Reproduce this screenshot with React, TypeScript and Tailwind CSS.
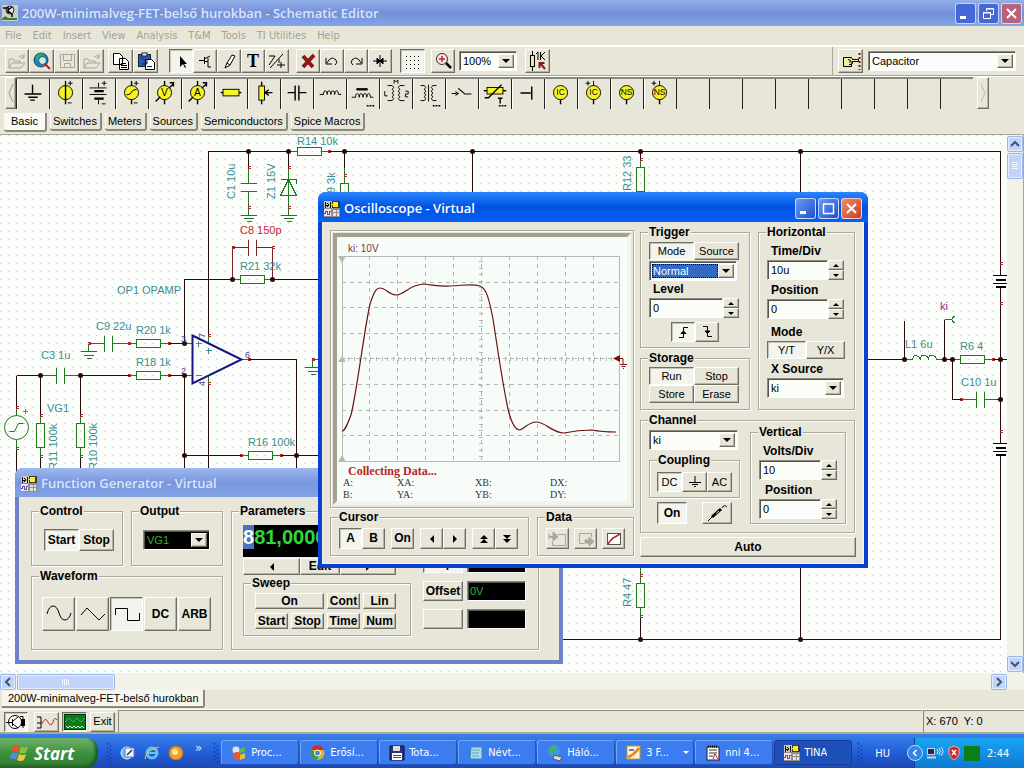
import type { ReactNode } from "react"
import clsx from "clsx"

const WIRE = "#2a0a0a"
const PART = "#1c7a1c"
const LABEL = "#3a8f94"

/* ---------- controls ---------- */

interface BtnProps {
  children?: ReactNode
  className?: string
  pressed?: boolean
  label?: string
}

function Btn({ children, className, pressed, label }: BtnProps) {
  return (
    <button
      type="button"
      aria-label={label}
      aria-pressed={pressed}
      className={clsx(
        "flex shrink-0 items-center justify-center overflow-hidden whitespace-nowrap border",
        pressed
          ? "border-t-[#716f64] border-l-[#716f64] border-r-white border-b-white bg-[#f3f4ed] shadow-[inset_1px_1px_0_#c5c4b8]"
          : "border-t-white border-l-white border-r-[#716f64] border-b-[#716f64] bg-[#e7e6d9] shadow-[inset_-1px_-1px_0_#b5b3a2]",
        className,
      )}
    >
      {children}
    </button>
  )
}

function Arrow({ dir = "down", size = 4 }: { dir?: "up" | "down" | "left" | "right"; size?: number }) {
  const d = {
    up: "M0 4 L4 0 L8 4Z",
    down: "M0 0 L8 0 L4 4Z",
    left: "M4 0 L4 8 L0 4Z",
    right: "M0 0 L4 4 L0 8Z",
  }[dir]
  const flat = dir === "up" || dir === "down"
  return (
    <svg width={flat ? size * 2 : size} height={flat ? size : size * 2} viewBox={flat ? "0 0 8 4" : "0 0 4 8"} aria-hidden>
      <path d={d} fill="#000" />
    </svg>
  )
}

const SUNKEN = "border border-t-[#8a887b] border-l-[#8a887b] border-r-white border-b-white shadow-[inset_1px_1px_0_#55544c]"

function Combo({ value, label, className, tone }: { value: string; label: string; className?: string; tone?: "dark" | "selected" }) {
  return (
    <div className={clsx("flex p-[2px]", SUNKEN, tone === "dark" ? "bg-black" : "bg-[#fbfdf9]", className)}>
      <select
        aria-label={label}
        defaultValue={value}
        className={clsx(
          "min-w-0 flex-1 appearance-none rounded-none pl-px",
          tone === "dark" && "bg-black text-[#35b535]",
          tone === "selected" && "bg-[#316ac5] text-white outline-1 -outline-offset-1 outline-dotted outline-black",
        )}
      >
        <option>{value}</option>
      </select>
      <Btn className="w-4" label={`Open ${label}`}>
        <Arrow />
      </Btn>
    </div>
  )
}

function Spin({ value, id, className }: { value: string; id: string; className?: string }) {
  return (
    <div className={clsx("flex h-5", className)}>
      <input id={id} defaultValue={value} className={clsx("min-w-0 flex-1 bg-[#fbfdf9] pl-[3px]", SUNKEN)} />
      <div className="flex w-4 flex-col">
        <Btn className="h-[10px]" label="Increase">
          <Arrow dir="up" size={3} />
        </Btn>
        <Btn className="h-[10px]" label="Decrease">
          <Arrow size={3} />
        </Btn>
      </div>
    </div>
  )
}

function Group({ title, className, children }: { title: string; className?: string; children: ReactNode }) {
  return (
    <fieldset className={clsx("min-w-0 border border-[#aaa999] px-2 shadow-[1px_1px_0_#fff,inset_1px_1px_0_#fff]", className)}>
      <legend className="-ml-px bg-[#e7e6d9] px-px text-[12px] leading-[12px] font-bold">{title}</legend>
      {children}
    </fieldset>
  )
}

function FieldLabel({ children, htmlFor, className }: { children: ReactNode; htmlFor?: string; className?: string }) {
  return (
    <label htmlFor={htmlFor} className={clsx("block text-[12px] leading-[14px] font-bold", className)}>
      {children}
    </label>
  )
}

/* ---------- small drawings ---------- */

function Icon({ children, w = 20, h = 20 }: { children: ReactNode; w?: number; h?: number }) {
  return (
    <svg width={w} height={h} viewBox={`0 0 ${w} ${h}`} fill="none" stroke="#000" className="shrink-0" aria-hidden>
      {children}
    </svg>
  )
}

function TinaIcon() {
  return (
    <svg width="16" height="16" viewBox="0 0 16 16" className="shrink-0" shapeRendering="crispEdges" aria-hidden>
      <rect width="16" height="16" fill="#8f9088" />
      <path d="M0 0h8v7H0z" fill="#c9c9b8" />
      <path d="M1 1v6M1 4h3M3 2l2 2-2 2M6 1v6" stroke="#111" strokeWidth="1" fill="none" />
      <rect x="8" y="0" width="8" height="7" fill="#3a3a3a" />
      <circle cx="11.500" cy="3.500" r="3" fill="#ffee20" />
      <rect x="0" y="8" width="7" height="7" fill="#f6e3ee" />
      <path d="M0 12h1v-2h2v3h2v-3h2" stroke="#5a52b0" fill="none" />
      <path d="M9 9h3v2H9zM13 9h2v2h-2zM9 12h3v3H9zM13 12h2v3h-2z" fill="#e4e4e0" />
    </svg>
  )
}

function CaptionButtons({ active, middle }: { active?: boolean; middle: "maximize" | "restore" }) {
  const base = "flex h-[21px] w-[21px] items-center justify-center rounded-[3px] border border-white/70"
  return (
    <div className="flex gap-[2px]">
      <button type="button" aria-label="Minimize" className={clsx(base, active ? "bg-linear-to-br from-[#6f9af2] to-[#1c4fd0]" : "bg-[#4468d8]")}>
        <Icon w={13} h={13}>
          <path d="M1 10.500h6" stroke="#fff" strokeWidth="3" />
        </Icon>
      </button>
      <button type="button" aria-label="Resize" className={clsx(base, active ? "bg-linear-to-br from-[#6f9af2] to-[#1c4fd0]" : "bg-[#4468d8]")}>
        <Icon w={13} h={13}>
          {middle === "maximize" ? (
            <path d="M1.500 2.500v9h10v-9M1 2h11" stroke="#fff" strokeWidth="1.500" />
          ) : (
            <path d="M4.500 4V1.500h7v6H9M4 2h8M1.500 5.500h7v6h-7zM1 6h8" stroke="#fff" />
          )}
        </Icon>
      </button>
      <button type="button" aria-label="Close" className={clsx(base, active ? "bg-linear-to-br from-[#ee8a6a] to-[#cc3c16]" : "bg-[#b5627a]")}>
        <Icon w={13} h={13}>
          <path d="M2 2l9 9M11 2l-9 9" stroke="#fff" strokeWidth="2" />
        </Icon>
      </button>
    </div>
  )
}

/* ---------- main tool bar ---------- */

function FolderShape() {
  return <path d="M2 17V8h4l1 2h6v2M2 17l3-5h13l-4 5zM12 6q3-3 5 0M17 3v4h-3" stroke="#a7a698" />
}

function MainToolbar() {
  const b = "h-6 w-6"
  return (
    <div className="flex h-[31px] items-center border-t-2 border-t-white border-b border-b-[#aaa999] pl-[5px]">
      <div className="flex">
        <Btn className={b} label="Open"><Icon><FolderShape /></Icon></Btn>
        <Btn className="h-6 w-[25px]" label="Open from Web">
          <Icon>
            <circle cx="9" cy="9" r="7" fill="#1f86b8" stroke="#1b3f8c" />
            <path d="M4 5q4-4 7-2l-3 3-3 4zM10 11l4-2v4l-4 2z" fill="#2eb25a" stroke="none" />
            <circle cx="10.500" cy="9.500" r="4" fill="#c9ecf0" stroke="#155" />
            <path d="M13 13l5 5" stroke="#c01818" strokeWidth="2" />
          </Icon>
        </Btn>
        <Btn className="h-6 w-[25px]" label="Save">
          <Icon><path d="M3.500 3.500h14v13h-14zM6.500 3.500v6h8v-6M7.500 16.500v-4h6v4" stroke="#a7a698" /></Icon>
        </Btn>
        <Btn className="h-6 w-[25px]" label="Close"><Icon><FolderShape /></Icon></Btn>
      </div>
      <div className="ml-1 flex">
        <Btn className="h-6 w-[25px]" label="Copy">
          <Icon>
            <path d="M2.500 2.500h6l3 3v8h-9zM8.500 7.500h6l3 3v8h-9z" fill="#fff" />
            <path d="M10 12.500h5M10 14.500h6M10 16.500h6" />
          </Icon>
        </Btn>
        <Btn className="h-6 w-[25px]" label="Paste">
          <Icon>
            <rect x="2.500" y="3.500" width="12" height="12" fill="#2a58c0" stroke="#123" />
            <path d="M9.500 8.500h6l3 3v7h-9z" fill="#fff" />
            <path d="M5 6l6 6M11 8v5h-5M11 15.500h5" stroke="#124" />
            <rect x="6" y="2" width="5" height="3" fill="#eee" stroke="#222" />
          </Icon>
        </Btn>
      </div>
      <div className="ml-[11px] flex">
        <Btn className={b} pressed label="Select"><Icon><path d="M9 5v11l3-3 2 4 1-1-2-3h3z" fill="#000" stroke="none" /></Icon></Btn>
        <Btn className={b} label="Last component"><Icon><path d="M4 9.500h5M9.500 6v7M9 8l6-3M10 10.500h3M13 7v9h3" /></Icon></Btn>
        <Btn className={b} label="Wire"><Icon><path d="M6 17l2-5 5-8 3 1-5 9zM8 12l3 2" fill="#fff" /></Icon></Btn>
        <Btn className={b} label="Text"><span className="font-['Liberation_Serif',serif] text-[18px] leading-none font-bold">T</span></Btn>
        <Btn className={b} label="Mirror"><Icon><path d="M2 5h6M3 17L16 3M2 14l6-9M12 8v4M10 14h8M14 11v6" /></Icon></Btn>
      </div>
      <div className="ml-[7px] flex">
        <Btn className={b} label="Delete"><Icon><path d="M5 5l10 11M16 4L5 16" stroke="#8f1616" strokeWidth="4" /></Icon></Btn>
        <Btn className={b} label="Undo"><Icon><path d="M5 12q4-8 9-3 2 3-1 5M4 7v6h6" /></Icon></Btn>
        <Btn className={b} label="Redo"><Icon><path d="M15 12q-4-8-9-3-2 3 1 5M16 7v6h-6" /></Icon></Btn>
        <Btn className={b} label="Center"><Icon><path d="M3 10h14M10 4v12" /><path d="M7 7l3 3-3 3zM13 7l-3 3 3 3z" fill="#000" /></Icon></Btn>
      </div>
      <Btn className="ml-2 h-6 w-[25px]" pressed label="Grid">
        <Icon><path d="M3 5.500h15M3 9.500h15M3 13.500h15M3 17.500h15" strokeDasharray="1 3" /></Icon>
      </Btn>
      <Btn className="ml-[6px] h-6 w-6" label="Zoom">
        <Icon>
          <circle cx="9" cy="8" r="5.500" fill="#f8e4dc" stroke="#333" />
          <path d="M6 8h6M9 5v6" stroke="#c22" strokeWidth="1.500" />
          <path d="M13 12l5 5" strokeWidth="2.500" />
        </Icon>
      </Btn>
      <Combo value="100%" label="Zoom level" className="ml-1 h-5 w-[58px]" />
      <Btn className="ml-2 h-6 w-[25px]" label="Component value">
        <svg width="22" height="20" viewBox="0 0 22 20" fill="none" stroke="#000" aria-hidden>
          <path d="M5.500 0v20" />
          <rect x="3.500" y="4.500" width="4" height="11" fill="#f4e79a" />
          <path d="M9 3l2-2v8M13.500 1v8M18 1l-4 4 4 4" />
          <path d="M12.500 17v-5h5M13 12l5 6" stroke="#8f1616" strokeWidth="2" />
        </svg>
      </Btn>
      <div className="ml-auto flex h-full items-center gap-[5px] border-l border-l-[#aaa999] pr-2 pl-[5px]">
        <Btn className="h-6 w-[25px]" label="Find component">
          <Icon>
            <path d="M2.500 6.500h8l1 2h6v2h-6v2h-1v3h-8z" fill="#f6ef9a" />
            <path d="M7 8.500l3 1M8 11h4M8 13.500h3" />
            <path d="M18.500 2v17" stroke="#811" strokeWidth="2" strokeDasharray="2 2" />
          </Icon>
        </Btn>
        <Combo value="Capacitor" label="Component list" className="h-5 w-[148px]" />
      </div>
    </div>
  )
}

/* ---------- component palette ---------- */

const Y = "#f7f425"

function Meter({ text, pm, arrow, feet, small }: { text?: string; pm?: boolean; arrow?: boolean; feet?: boolean; small?: boolean }) {
  return (
    <>
      <path d={small ? "M15.500 17v12" : "M15.500 4v25"} strokeWidth="1.500" />
      <circle cx="15.500" cy="16.500" r="7.500" fill={Y} />
      {arrow && <path d="M6 26l5-5M20 12l5-5M21 6h4v4" strokeWidth="1.500" />}
      {pm && <path d="M18 6.500h5M20.500 4v5M18 27.500h4" />}
      {feet && <path d="M7 6.500h5M9.500 4v5M15.500 4v5" />}
      {text && (
        <text x="15.500" y={small ? 19.500 : 20.500} textAnchor="middle" fill="#000" stroke="none" fontSize={small ? 9 : 11} fontFamily="Liberation Sans">
          {text}
        </text>
      )}
    </>
  )
}

const Dots = () => <path d="M20 30.500h8" strokeDasharray="2 1" strokeWidth="1.500" />

const palette: { name: string; art: ReactNode }[] = [
  { name: "Ground", art: <path d="M15.500 8v10M7 18h18M11 21.500h10M13 24.500h5" strokeWidth="1.500" /> },
  { name: "Voltage source", art: <><Meter pm /><path d="M15.500 9v15" strokeWidth="1.500" /></> },
  { name: "Battery", art: <><path d="M15.500 6v5M15.500 24v5M6 11.500h18M6 18.500h18M19 6.500h5M21.500 4v5M19 28.500h4" /><path d="M11 15h10M11 23h10" strokeWidth="2.500" /></> },
  { name: "Voltage generator", art: <><Meter pm /><path d="M10 19l4-1 3-4 4-1" /></> },
  { name: "Voltmeter", art: <Meter text="V" arrow /> },
  { name: "Ammeter", art: <Meter text="A" arrow /> },
  { name: "Resistor", art: <><path d="M5 16.500h22" strokeWidth="1.500" /><rect x="7.500" y="13" width="17" height="7" fill={Y} /></> },
  { name: "Potentiometer", art: <><path d="M13.500 5v24M17 16.500h8M21 13.500l-4 3 4 3" strokeWidth="1.500" /><rect x="10.500" y="9.500" width="6" height="15" fill={Y} /></> },
  { name: "Capacitor", art: <path d="M6 16.500h8M18 16.500h8M14 9v16M18 9v16" strokeWidth="1.500" /> },
  { name: "Inductor", art: <path d="M5 18.500h4q0-4 2-4t2 4q0-4 2-4t2 4q0-4 2-4t2 4q0-4 2-4t2 4h3" /> },
  { name: "Core inductor", art: <><path d="M9 13h12" strokeWidth="2.500" /><path d="M4 21.500h4q0-4 2-4t2 4q0-4 2-4t2 4q0-4 2-4t2 4q0-4 2-4t2 4h3" /><Dots /></> },
  { name: "Coupled inductors", art: <path d="M7 9h5q3 2 0 4 3 2 0 4 3 2 0 4 3 2 0 4H7M25 9h-5q-3 2 0 4-3 2 0 4-3 2 0 4-3 2 0 4h5M14 7V3l2 2 2-2v4M4 15v5h3M26 15h3v3h-3v3h3" /> },
  { name: "Transformer", art: <><path d="M7 9h4q3 2 0 4 3 2 0 4 3 2 0 4 3 2 0 4H7M24 9h-4q-3 2 0 4-3 2 0 4-3 2 0 4-3 2 0 4h4M15.500 8v18" /><Dots /></> },
  { name: "Switch", art: <path d="M5 17.500h5M9 15.500l3 2-3 2M12 12l7 6h7" strokeWidth="1.200" /> },
  { name: "Thermistor", art: <><path d="M4 14.500h24" strokeWidth="1.500" /><rect x="7.500" y="11" width="17" height="7" fill={Y} /><path d="M5 22h4L23 8M19 22.500h5M21.500 22v6" strokeWidth="1.500" /><Dots /></> },
  { name: "Jumper", art: <path d="M8 17h11M20 10v14" strokeWidth="1.500" /> },
  { name: "IC", art: <Meter text="IC" small /> },
  { name: "Open IC", art: <Meter text="IC" feet small /> },
  { name: "NS", art: <Meter text="NS" small /> },
  { name: "Open NS", art: <Meter text="NS" feet small /> },
]

function Palette() {
  return (
    <div className="flex h-[37px] items-start overflow-hidden border-t border-t-white pl-[5px]">
      <Btn className="h-8 w-[11px]" label="Scroll left">
        <Icon w={7} h={20}><path d="M6 1L2 10l4 9" stroke="#999" /></Icon>
      </Btn>
      <div className="flex h-8 border-t-2 border-t-[#8a887b]">
        {palette.map((c) => (
          <button key={c.name} type="button" aria-label={c.name} className="flex w-[33px] shrink-0 items-center border-l border-l-[#222] shadow-[inset_1px_0_0_#fff]">
            <svg width="32" height="30" viewBox="-1 2 34 32" fill="none" stroke="#000" aria-hidden>{c.art}</svg>
          </button>
        ))}
        {Array.from({ length: 9 }, (_, i) => (
          <span key={i} className="w-[33px] shrink-0 border-l border-l-[#222]" />
        ))}
      </div>
      <Btn className="ml-1 h-8 w-3" label="Scroll right">
        <Icon w={7} h={20}><path d="M1 1l4 9-4 9" stroke="#bbb" /></Icon>
      </Btn>
    </div>
  )
}

/* ---------- schematic ---------- */

type Pt = [number, number]

const wires = [
  "M208 335V151H288M328 151H1000V639H562M344 151v16M472 151v42M800 151v42M800 560v79M640 151v8M640 616v23",
  "M248 151v16M288 151v16M184 343V279H232M272 279h48M248 359h48v110M208 383v90",
  "M168 343h16M168 375h16M184 375v96M184 455h56M280 455h40M16 375H40M80 375h48M16 375v32M16 448v24",
  "M40 375v40M80 375v40M40 456v20M80 456v20M860 359h44M904 320v39M944 319v40M944 359h8M992 359h15M952 359v40h8M984 399h16",
]

const parts = [
  "M288 151h8M321 151h7M296.500 147h24v8h-24z M248 167v16M240 183h16M240 191h16M248 191v24M240 215h16M243 218h10M246 221h5",
  "M288 167v48M280 179h16v4M288 179l-8 16h16zM280 215h16M283 218h10M286 221h5M232 279h8M264 275h-24v8h24zM264 279h8",
  "M88 343h16M88 343v8M80 351h16M83 355h10M86 358h5M104 335v16M112 335v16M112 343h24M136 339h24v8h-24zM160 343h8M184 343h8",
  "M40 375h16M56 367v16M64 367v16M64 375h16M128 375h8M136 371h24v8h-24zM160 375h8M184 375h8",
  "M40 415v8M36 423h8v24h-8zM40 447v9M80 415v8M76 423h8v24h-8zM80 447v9M16 407v8M16 439v9M240 455h8M248 451h24v8h-24zM272 455h8",
  "M208 335v8M208 375v8M240 359h8M304 367h16M307 371h10M310 374h5M312 367v-8h8M344 167v16M340 183h8v24h-8z",
  "M640 159v8M636 167h8v24h-8zM640 560v23M636 583h8v24h-8zM640 607v9",
  "M904 359h8q1-5 4-4t4 4q0-5 4-4t4 4q0-5 4-4t4 4h8M944 319h7M955 315q-7 4 0 8M952 359h8M960 355h24v8h-24zM984 359h8M960 399h16M976 391v16M984 391v16M984 399h12",
]

const junctions: Pt[] = [
  [248, 151], [288, 151], [344, 151], [472, 151], [640, 151], [800, 151], [232, 279], [272, 279], [184, 343], [184, 375],
  [40, 375], [80, 375], [184, 455], [296, 455], [904, 359], [944, 359], [952, 359], [1000, 359], [1000, 399], [640, 639], [800, 639],
]

const pins: Pt[] = [
  [328, 151], [248, 167], [248, 207], [288, 167], [288, 207], [344, 175], [640, 159], [232, 247], [272, 247], [88, 343], [128, 343], [168, 343],
  [128, 375], [168, 375], [16, 407], [16, 448], [40, 415], [80, 415], [40, 456], [80, 456], [208, 335], [208, 383], [248, 359],
  [240, 455], [280, 455], [312, 359], [1000, 263], [1000, 303], [1000, 431], [992, 359], [960, 399], [640, 575], [640, 616],
]

interface Tag { t: string; x: number; y: number; v?: boolean; c?: string }

const tags: Tag[] = [
  { t: "R14 10k", x: 297, y: 145 },
  { t: "C1 10u", x: 235, y: 199, v: true },
  { t: "Z1 15V", x: 275, y: 199, v: true },
  { t: "R9 3k", x: 335, y: 201, v: true },
  { t: "R12 33", x: 631, y: 191, v: true },
  { t: "C8 150p", x: 240, y: 234, c: "#c8242c" },
  { t: "R21 32k", x: 240, y: 270 },
  { t: "OP1 OPAMP", x: 117, y: 294 },
  { t: "C9 22u", x: 96, y: 330 },
  { t: "R20 1k", x: 136, y: 334 },
  { t: "R18 1k", x: 136, y: 366 },
  { t: "C3 1u", x: 41, y: 359 },
  { t: "VG1", x: 47, y: 412 },
  { t: "R11 100k", x: 57, y: 470, v: true },
  { t: "R10 100k", x: 97, y: 470, v: true },
  { t: "R16 100k", x: 248, y: 446 },
  { t: "ki", x: 940, y: 310, c: "#8c2c8c" },
  { t: "L1 6u", x: 905, y: 348 },
  { t: "R6 4", x: 960, y: 350 },
  { t: "C10 1u", x: 961, y: 386 },
  { t: "R4 47", x: 631, y: 607, v: true },
]

function Schematic() {
  return (
    <svg className="block h-full w-full" role="img" aria-label="Amplifier schematic">
      <defs>
        <pattern id="grid" width="8" height="8" patternUnits="userSpaceOnUse">
          <rect x="0" y="0" width="1" height="1" fill="#b9d2c6" />
        </pattern>
      </defs>
      <rect width="100%" height="100%" fill="#fafdf9" />
      <rect width="100%" height="100%" fill="url(#grid)" />
      <g transform="translate(0.5 -134.5)" fill="none" shapeRendering="crispEdges">
        {wires.map((d) => <path key={d} d={d} stroke={WIRE} />)}
        {parts.map((d) => <path key={d} d={d} stroke={PART} />)}
        <path d="M232 279V247h16M256 247h16v32M248 239v16M256 239v16" stroke="#7c2222" />
        <circle cx="16" cy="427" r="12" stroke={PART} shapeRendering="auto" />
        <path d="M9 431h5l4-8h5" stroke={PART} shapeRendering="auto" />
        <path d="M22 411h5M24.500 408.500v5M195 343h6M198 340v6M205 350h6M208 347v6M195 375h6" stroke={LABEL} />
        <path d="M192 335l49 24-49 24z" stroke="#151585" strokeWidth="2" shapeRendering="auto" />
        {/* supply batteries */}
        <path d="M998 275h5v11h-5zM998 443h5v11h-5z" fill="#fafdf9" />
        <path d="M992 275h15M992 283h15M992 443h15M992 451h15M1006 265h1M1006 433h1" stroke="#000" />
        <path d="M995 279h10M995 286h10M995 447h10M995 454h10" stroke="#000" strokeWidth="2" />
        {junctions.map(([x, y]) => <circle key={`${x}-${y}`} cx={x} cy={y} r="2.500" fill={WIRE} shapeRendering="auto" />)}
        {pins.map(([x, y]) => <path key={`${x}-${y}`} d={`M${x - 1} ${y - 1}h3M${x - 1} ${y + 1}h3`} stroke="#a03030" />)}
      </g>
      <g transform="translate(0 -135)" fontFamily="Liberation Sans" fontSize="11">
        {tags.map((t) => (
          <text key={t.t} x={t.x} y={t.y} fill={t.c ?? LABEL} transform={t.v ? `rotate(-90 ${t.x} ${t.y})` : undefined}>
            {t.t}
          </text>
        ))}
        <g fontSize="9" fill="#3c3c8c">
          <text x="181" y="342">3</text>
          <text x="181" y="374">2</text>
          <text x="245" y="358">6</text>
          <text x="205" y="338" transform="rotate(-90 205 338)">7</text>
          <text x="205" y="386" transform="rotate(-90 205 386)">4</text>
        </g>
      </g>
    </svg>
  )
}

/* ---------- oscilloscope ---------- */

function ScopeScreen() {
  const cols = Array.from({ length: 9 }, (_, i) => 28 * (i + 1) - 1)
  const rows = [0, 1, 2, 4, 5, 6].map((i) => Math.round(25.6 * (i + 1)))
  return (
    <svg width="290" height="206" viewBox="-5 0 290 206" fill="none" className="block" role="img" aria-label="Trace of channel ki">
      <g stroke="#b4bab5" shapeRendering="crispEdges">
        <path d="M0.500 0.500h277v205h-277z" />
        {cols.map((x) => <path key={x} d={`M${x + 0.5} 0v205`} strokeDasharray="4 4" />)}
        {rows.map((y) => <path key={y} d={`M0 ${y + 0.5}h277`} strokeDasharray="4 4" />)}
        <path d="M0 102.500h277" strokeDasharray="4 3" />
        <path d="M139 5v198" strokeDasharray="1 5.500" strokeWidth="4" />
        <path d="M6 102.500h264" strokeDasharray="1 4.600" strokeWidth="4" />
      </g>
      <path d="M-4 0h8l-4 7zM-4 206h8l-4-7zM-4 106h8l-4-6z" fill="#b4bab5" />
      <path
        d="M0 175C3 175 5 169 9 159C15 135 22 75 28 48C33 33 35 32 38 32C44 32 47 39 54 39C62 39 68 28 82 28C92 29 98 31 108 30C120 30 128 27 138 30C144 32 147 42 151 63C156 95 160 125 166 153C170 170 174 174 178 174C183 172 187 166 194 166C204 166 210 177 222 177C236 174 240 174 250 174C260 176 265 176 274 176"
        stroke="#6a1212"
        strokeWidth="1.200"
      />
      <path d="M271 102.500l7-3.500v7z" fill="#7a1010" />
      <path d="M278 102.500h3v6M278 108.500h7M279.500 110.500h4M281 112.500h1" stroke="#7a1010" />
    </svg>
  )
}

const readouts = [["A:", "XA:", "XB:", "DX:"], ["B:", "YA:", "YB:", "DY:"]]

function Oscilloscope() {
  return (
    <section
      aria-label="Oscilloscope - Virtual"
      className="absolute top-[57px] left-[318px] w-[550px] rounded-t-lg border-x-4 border-b-4 border-[#0a3fd2] bg-[#e7e6d9] shadow-[inset_0_0_0_1px_#f3f3ea]"
    >
      <header className="-mx-1 flex h-[30px] items-center gap-1 rounded-t-lg bg-linear-to-b from-[#2b86ff] via-[#0052e2] to-[#0460f4] pt-[3px] pr-[6px] pl-[6px]">
        <TinaIcon />
        <h2 className="flex-1 font-['Open_Sans',sans-serif] text-[13px] font-semibold text-white">Oscilloscope - Virtual</h2>
        <CaptionButtons active middle="maximize" />
      </header>

      <div className="flex gap-[6px] pt-1 pr-2 pb-[7px] pl-2">
        <div className="flex w-[304px] flex-col pt-1">
          <div className="border border-[#aaa999] p-[2px] shadow-[1px_1px_0_#fff,inset_1px_1px_0_#fff]">
            <div className="border-4 border-t-[#a0a390] border-r-[#f3f4ee] border-b-[#f3f4ee] border-l-[#a0a390] bg-[#f8fcf8]">
              <p className="h-[19px] pt-[5px] pl-[11px] text-[10px] leading-[14px] text-[#7a3a3a]">ki: 10V</p>
              <ScopeScreen />
              <div className="px-[6px] pt-[3px] font-['Liberation_Serif',serif] leading-[12px]">
                <p className="pl-[5px] text-[12px] font-bold text-[#b8252c]">Collecting Data...</p>
                {readouts.map((row) => (
                  <div key={row[0]} className="grid grid-cols-[54px_78px_75px_1fr] text-[10px] text-[#333]">
                    {row.map((r) => <span key={r}>{r}</span>)}
                  </div>
                ))}
              </div>
            </div>
          </div>

          <div className="mt-[3px] flex gap-2">
            <Group title="Cursor" className="w-[199px] pb-[6px]">
              <div className="flex pt-[5px] text-[12px] font-bold">
                <Btn className="h-[21px] w-[23px]" pressed>A</Btn>
                <Btn className="h-[21px] w-[23px]">B</Btn>
                <Btn className="ml-[6px] h-[21px] w-[23px]">On</Btn>
                <Btn className="ml-[6px] h-[21px] w-[23px]" label="Cursor left"><Arrow dir="left" /></Btn>
                <Btn className="h-[21px] w-[23px]" label="Cursor right"><Arrow dir="right" /></Btn>
                <Btn className="ml-[6px] h-[21px] w-[23px] flex-col" label="Cursor to maximum"><Arrow dir="up" /><Arrow dir="up" /></Btn>
                <Btn className="h-[21px] w-[23px] flex-col" label="Cursor to minimum"><Arrow /><Arrow /></Btn>
              </div>
            </Group>
            <Group title="Data" className="flex-1 pb-[6px]">
              <div className="flex gap-[5px] pt-[5px]">
                <Btn className="h-[21px] w-[23px]" label="Import">
                  <Icon><path d="M10 5.500h7.500v11h-13v-4" stroke="#a7a698" /><path d="M1 5v5M1 7.500h4V3l5 4.500-5 4.500V9z" fill="#a7a698" stroke="#a7a698" /></Icon>
                </Btn>
                <Btn className="h-[21px] w-[23px]" label="Export">
                  <Icon><path d="M15.500 8V4.500h-12v10h5" stroke="#a7a698" /><path d="M9 11h4V8l5 4.500-5 4.500v-3H9z" fill="#a7a698" stroke="#a7a698" /></Icon>
                </Btn>
                <Btn className="h-[21px] w-[23px]" label="Show diagram">
                  <Icon><rect x="3.500" y="4.500" width="13" height="11" fill="#fff" stroke="#555" /><path d="M4 15q4-6 7-7l5-3" stroke="#b82020" strokeWidth="1.500" /></Icon>
                </Btn>
              </div>
            </Group>
          </div>
        </div>

        <div className="min-w-0 flex-1">
          <div className="flex gap-2">
            <div className="flex w-[110px] flex-col gap-1">
              <Group title="Trigger" className="pb-[5px]">
                <div className="flex pt-1">
                  <Btn className="h-[18px] w-[45px]" pressed>Mode</Btn>
                  <Btn className="h-[18px] w-[45px]">Source</Btn>
                </div>
                <Combo value="Normal" label="Trigger mode" tone="selected" className="mt-px h-5 w-[88px]" />
                <FieldLabel htmlFor="level" className="pt-px pl-1">Level</FieldLabel>
                <Spin id="level" value="0" className="mt-[2px] w-[90px]" />
                <div className="mt-1 flex justify-center">
                  <Btn className="h-5 w-6" pressed label="Rising edge"><Icon w={16} h={16}><path d="M4 13.500h4.500v-10H13" /><path d="M6 9.500L8.500 7 11 9.500z" fill="#000" /></Icon></Btn>
                  <Btn className="h-5 w-6" label="Falling edge"><Icon w={16} h={16}><path d="M4 2.500h4.500v10H13" /><path d="M6 7L8.500 9.500 11 7z" fill="#000" /></Icon></Btn>
                </div>
              </Group>
              <Group title="Storage" className="pb-[6px]">
                <div className="grid grid-cols-[45px_45px] pt-[3px]">
                  <Btn className="h-[18px]" pressed>Run</Btn>
                  <Btn className="h-[18px]">Stop</Btn>
                  <Btn className="h-[18px]">Store</Btn>
                  <Btn className="h-[18px]">Erase</Btn>
                </div>
              </Group>
            </div>

            <Group title="Horizontal" className="w-[97px]">
              <FieldLabel htmlFor="timediv" className="pt-[6px] pl-1">Time/Div</FieldLabel>
              <Spin id="timediv" value="10u" className="mt-[2px] w-[77px]" />
              <FieldLabel htmlFor="hpos" className="pt-[3px] pl-1">Position</FieldLabel>
              <Spin id="hpos" value="0" className="mt-[2px] w-[77px]" />
              <FieldLabel className="pt-[6px] pl-1">Mode</FieldLabel>
              <div className="mt-[2px] flex">
                <Btn className="h-[18px] w-[39px]" pressed>Y/T</Btn>
                <Btn className="h-[18px] w-[39px]">Y/X</Btn>
              </div>
              <FieldLabel className="pt-[3px] pl-1">X Source</FieldLabel>
              <Combo value="ki" label="X Source" className="mt-[2px] h-5 w-[77px]" />
            </Group>
          </div>

          <Group title="Channel" className="mt-1 w-[215px] pb-2">
            <div className="flex gap-[10px]">
              <div className="w-[91px]">
                <Combo value="ki" label="Channel" className="mt-1 h-5 w-[89px]" />
                <Group title="Coupling" className="mt-1 w-[91px] pb-[5px]">
                  <div className="-mx-px flex pt-[6px]">
                    <Btn className="h-5 w-[25px]" pressed>DC</Btn>
                    <Btn className="h-5 w-[25px]" label="Ground"><Icon w={14} h={14}><path d="M7 1v6M1 7.500h12M4 9.500h6M6 11.500h2" /></Icon></Btn>
                    <Btn className="h-5 w-[25px]">AC</Btn>
                  </div>
                </Group>
                <div className="mt-1 flex justify-between px-2">
                  <Btn className="h-[22px] w-[30px] text-[12px] font-bold" pressed>On</Btn>
                  <Btn className="h-[22px] w-[30px]" label="Pick node">
                    <svg width="22" height="18" viewBox="0 0 22 18" stroke="#000" fill="none" aria-hidden>
                      <path d="M2 17l4-4M16 4q2-4 5-1" />
                      <path d="M6 13l9-8" strokeWidth="3" />
                      <path d="M10 9.500l3-2.500" stroke="#ddd" />
                    </svg>
                  </Btn>
                </div>
              </div>
              <Group title="Vertical" className="w-[96px] self-stretch">
                <FieldLabel htmlFor="volts" className="pt-[6px] pl-1">Volts/Div</FieldLabel>
                <Spin id="volts" value="10" className="mt-[2px] w-[78px]" />
                <FieldLabel htmlFor="vpos" className="pt-[3px] pl-[6px]">Position</FieldLabel>
                <Spin id="vpos" value="0" className="mt-[2px] w-[78px]" />
              </Group>
            </div>
          </Group>
          <Btn className="mt-1 h-5 w-full text-[12px] font-bold">Auto</Btn>
        </div>
      </div>
    </section>
  )
}

/* ---------- function generator ---------- */

const waveforms = [
  { name: "Sine", d: "M3 14q2-8 6-8t6 7 6 7 6-7" },
  { name: "Triangle", d: "M3 15l6-7 12 12 6-6" },
  { name: "Square", d: "M3.500 15V8.500h12v12h12V13" },
]

function FunctionGenerator() {
  return (
    <section
      aria-label="Function Generator - Virtual"
      className="absolute top-[333px] left-[15px] w-[548px] rounded-t-lg border-x-4 border-b-4 border-[#6f80cc] bg-[#e7e6d9]"
    >
      <header className="-mx-1 flex h-[29px] items-center gap-1 rounded-t-lg bg-linear-to-b from-[#9db9eb] via-[#7a96df] to-[#82a2e6] pt-[2px] pl-[6px]">
        <TinaIcon />
        <h2 className="font-['Open_Sans',sans-serif] text-[13px] font-semibold text-[#dbe5f8]">Function Generator - Virtual</h2>
      </header>
      <div className="flex gap-2 pt-2 pb-[10px] pl-3">
        <div className="flex w-[192px] flex-col gap-1">
          <div className="grid grid-cols-2 gap-2">
            <Group title="Control" className="pb-[14px]">
              <div className="flex pt-3 pl-1 text-[12px] font-bold">
                <Btn className="h-[22px] w-[35px]" pressed>Start</Btn>
                <Btn className="h-[22px] w-[35px]">Stop</Btn>
              </div>
            </Group>
            <Group title="Output" className="pb-[14px]">
              <Combo value="VG1" label="Output" tone="dark" className="mt-[13px] ml-[3px] h-5 w-[67px]" />
            </Group>
          </div>
          <Group title="Waveform" className="pb-[18px]">
            <div className="flex gap-px pt-[15px] pl-[2px] text-[12px] font-bold">
              {waveforms.map((w) => (
                <Btn key={w.name} label={w.name} pressed={w.name === "Square"} className="h-[34px] w-[33px]">
                  <Icon w={30} h={28}><path d={w.d} /></Icon>
                </Btn>
              ))}
              <Btn className="h-[34px] w-[33px]">DC</Btn>
              <Btn className="h-[34px] w-[33px]">ARB</Btn>
            </div>
          </Group>
        </div>

        <Group title="Parameters" className="w-[308px]">
          <div className="flex justify-between pr-1 pl-[3px]">
            <div className="w-[168px]">
              <div className="mt-2 flex h-8 w-[153px] overflow-hidden bg-black font-bold text-[#2fd83a]">
                <span className="h-6 bg-[#4a74bd] text-[20px] leading-6 text-white">8</span>
                <output className="text-[20px] leading-6">81,0000</output>
              </div>
              <div className="mt-px flex text-[12px] font-bold">
                <Btn className="h-[17px] w-[57px]" label="Previous digit"><Arrow dir="left" /></Btn>
                <Btn className="h-[17px] w-10">Edit</Btn>
                <Btn className="h-[17px] w-[56px]" label="Next digit"><Arrow dir="right" /></Btn>
              </div>
              <Group title="Sweep" className="mt-[2px] pb-[6px]">
                <div className="grid grid-cols-4 gap-x-[3px] gap-y-[4px] pt-1 pr-[6px] pl-[3px] text-[12px] font-bold">
                  <Btn className="col-span-2 h-4">On</Btn>
                  <Btn className="h-4">Cont</Btn>
                  <Btn className="h-4">Lin</Btn>
                  <Btn className="h-4">Start</Btn>
                  <Btn className="h-4">Stop</Btn>
                  <Btn className="h-4">Time</Btn>
                  <Btn className="h-4">Num</Btn>
                </div>
              </Group>
            </div>
            <div className="grid grid-cols-[40px_59px] content-end gap-x-1 gap-y-2 pb-[7px] text-[12px] font-bold">
              <Btn className="h-5" pressed>Ampl.</Btn>
              <input aria-label="Amplitude" className={clsx("h-5 bg-black", SUNKEN)} />
              <Btn className="h-5">Offset</Btn>
              <input aria-label="Offset" defaultValue="0V" className={clsx("h-5 bg-black pl-[2px] text-[11px] font-normal text-[#35b535]", SUNKEN)} />
              <Btn className="h-5" label="Unused" />
              <input aria-label="Unused value" className={clsx("h-5 bg-black", SUNKEN)} />
            </div>
          </div>
        </Group>
      </div>
    </section>
  )
}

/* ---------- scroll bars ---------- */

const SCROLL_BTN = "flex shrink-0 items-center justify-center rounded-[2px] border border-[#9db6ee] bg-[#c3d4fb] shadow-[inset_0_0_0_1px_#e4ecfd]"

function ScrollBtn({ d, name }: { d: string; name: string }) {
  return (
    <button type="button" aria-label={name} className={clsx(SCROLL_BTN, "h-4 w-4")}>
      <Icon w={10} h={10}><path d={d} stroke="#42527c" strokeWidth="2" /></Icon>
    </button>
  )
}

/* ---------- task bar ---------- */

const taskIcons: Record<string, ReactNode> = {
  proc: <><circle cx="5" cy="5" r="4" fill="#d9e8f8" stroke="#5b8fd0" /><circle cx="6" cy="11" r="4" fill="#e05a2c" stroke="none" /><path d="M9 4l5-2v4l-5 2z" fill="#5fbf3c" stroke="none" /><path d="M9 10l5-2v5l-5 2z" fill="#f0c030" stroke="none" /></>,
  chrome: <><circle cx="7.500" cy="8" r="7" fill="#e3b723" stroke="none" /><path d="M1 5a7 7 0 0 1 13 0H7z" fill="#c9302a" stroke="none" /><path d="M1 5a7 7 0 0 0 6 10l3-6z" fill="#3a9a3c" stroke="none" /><circle cx="7.500" cy="8" r="3" fill="#4a86d8" stroke="#fff" /></>,
  floppy: <><path d="M1 1h14v14H1z" fill="#27357c" stroke="#111" /><rect x="4" y="1" width="7" height="5" fill="#ddd" stroke="none" /><rect x="3" y="8" width="10" height="7" fill="#fff" stroke="none" /><path d="M4 10.500h8M4 12.500h8" stroke="#c02020" /></>,
  pad: <><path d="M3 2h11v12H2z" fill="#a9dcec" stroke="#3c88b0" /><path d="M4 5h8M4 8h7M4 11h7" stroke="#5fa8c8" /></>,
  net: <><circle cx="7" cy="6" r="6" fill="#3b9adc" stroke="none" /><path d="M2 4q3-4 6-3l-1 5-3 3z" fill="#45b548" stroke="none" /><path d="M7 10l8 2-2 4-7-2z" fill="#d5d9de" stroke="#555" /></>,
  files: <><rect x="1" y="1" width="13" height="13" fill="#fff8e0" stroke="#c89520" /><path d="M2 12q6-2 11-9" stroke="#e88a18" strokeWidth="3" /><path d="M3 5h5" stroke="#4a86d8" strokeWidth="2" /></>,
  note: <><rect x="2" y="2" width="12" height="13" fill="#fff" stroke="#222" /><path d="M4 5h8M4 8h8M4 11h4" stroke="#333" /><path d="M8 14l2-5 3 5" stroke="#c02020" /><path d="M3 1.500h10" strokeDasharray="1 1" strokeWidth="2" /></>,
}

const tasks = [
  { icon: "proc", text: "Proc..." },
  { icon: "chrome", text: "Erősí..." },
  { icon: "floppy", text: "Tota..." },
  { icon: "pad", text: "Névt..." },
  { icon: "net", text: "Háló..." },
  { icon: "files", text: "3 F...", menu: true },
  { icon: "note", text: "nni 4..." },
  { icon: "tina", text: "TINA", active: true },
]

function Grip() {
  return (
    <svg width="6" height="20" viewBox="0 0 6 20" stroke="#153a96" strokeWidth="1.500" aria-hidden>
      <path d="M1.500 0v20M4.500 2v18" strokeDasharray="1.500 2.500" />
    </svg>
  )
}

function TaskBar() {
  return (
    <footer className="flex h-[34px] shrink-0 items-stretch bg-linear-to-b from-[#3a81e8] via-[#2460dc] to-[#1c48b4] pt-1 font-['DejaVu_Sans_Condensed','DejaVu_Sans',sans-serif] text-[11px] text-white">
      <button
        type="button"
        className="flex w-[98px] items-center gap-[5px] rounded-r-xl bg-linear-to-b from-[#6fb26b] via-[#3d913d] to-[#2f7a2f] pl-[10px] font-['Open_Sans',sans-serif] text-[17px] font-bold text-white italic shadow-[inset_-3px_-2px_3px_#1f5c20]"
      >
        <svg width="19" height="18" viewBox="0 0 19 18" aria-hidden>
          <path d="M3 2q4-2 7 0L8 8Q5 6 1 8z" fill="#e8562c" />
          <path d="M11 2.500q4 2 7 0l-2 6q-4 2-7 0z" fill="#86c440" />
          <path d="M1 9.500q4-2 7 0l-2 6q-3-2-6 0z" fill="#4a8ee8" />
          <path d="M9 10q4 2 7 0l-2 6q-4 2-7 0z" fill="#f5c53c" />
        </svg>
        Start
      </button>
      <div className="flex items-center gap-2 pl-2">
        <Grip />
        <Icon w={16} h={16}><circle cx="7" cy="8" r="6" fill="#6fb6ee" stroke="#dff" /><path d="M5 3h9v9H5z" fill="#eef6fc" stroke="#77a" /><path d="M7 10l5-5" stroke="#236" strokeWidth="1.500" /></Icon>
        <Icon w={16} h={16}><circle cx="8" cy="8" r="5" stroke="#5ec4f8" strokeWidth="3" /><path d="M4 8h9" stroke="#5ec4f8" strokeWidth="2" /><path d="M1 14Q2 5 15 2" stroke="#f5c542" /></Icon>
        <Icon w={16} h={16}><circle cx="8" cy="8" r="7" fill="#f0a030" stroke="#c06818" /><circle cx="7" cy="7" r="3" fill="#fde6a8" stroke="none" /></Icon>
        <span className="px-[3px] pb-3 text-[13px] text-[#dfe9ff]">»</span>
        <Grip />
      </div>
      <nav className="flex min-w-0 flex-1 gap-px pl-[2px]">
        {tasks.map((t) => (
          <button
            key={t.text}
            type="button"
            className={clsx(
              "mt-[2px] mb-[3px] flex w-[78px] min-w-0 items-center gap-1 rounded-[3px] border pl-[9px] text-left whitespace-nowrap",
              t.active ? "border-[#173c98] bg-[#1d50b8]" : "border-t-[#6fa4f8] border-l-[#6fa4f8] border-r-[#2453c0] border-b-[#2453c0] bg-[#3b7df0]",
            )}
          >
            {t.icon === "tina" ? <TinaIcon /> : <Icon w={16} h={16}>{taskIcons[t.icon]}</Icon>}
            <span className="overflow-hidden">{t.text}</span>
            {t.menu && <svg width="6" height="3" viewBox="0 0 6 3" className="mr-1 ml-auto shrink-0" aria-hidden><path d="M0 0h6L3 3z" fill="#fff" /></svg>}
          </button>
        ))}
      </nav>
      <div className="flex items-center gap-3 pr-6">
        <Grip />
        <span>HU</span>
      </div>
      <div className="flex w-[110px] items-center gap-[3px] border-l border-l-[#0c3ea0] bg-linear-to-b from-[#1aa4f2] via-[#1290e6] to-[#0f79d0]">
        <button type="button" aria-label="Show hidden icons" className="-ml-2 flex h-4 w-4 items-center justify-center rounded-full border border-[#b8dcff] bg-[#2f86e6]">
          <Icon w={8} h={8}><path d="M5.500 1l-3 3 3 3" stroke="#fff" strokeWidth="1.500" /></Icon>
        </button>
        <Icon w={18} h={16}><rect x="1.500" y="3.500" width="7" height="6" fill="#222c50" stroke="#c9d4e8" /><path d="M1 12.500h9" stroke="#c9d4e8" strokeWidth="2" /><path d="M11 4q2 2 0 5M13 3q3 3 0 7M15 2q4 4 0 9" stroke="#dbe9f8" /></Icon>
        <Icon w={14} h={16}><path d="M2 3l5-2 5 2v6q-1 4-5 6-4-2-5-6z" fill="#c92a2a" stroke="#eaa" /><path d="M5 5l4 5M9 5l-4 5" stroke="#fff" strokeWidth="1.500" /></Icon>
        <span className="h-[15px] w-4 bg-[#0b8017]" />
        <time className="flex-1 pl-1">2:44</time>
      </div>
    </footer>
  )
}

/* ---------- main window ---------- */

const menus = ["File", "Edit", "Insert", "View", "Analysis", "T&M", "Tools", "TI Utilities", "Help"]
const tabs = ["Basic", "Switches", "Meters", "Sources", "Semiconductors", "Spice Macros"]

export default function App() {
  return (
    <div className="flex h-screen flex-col overflow-hidden bg-[#e7e6d9] font-['Liberation_Sans',sans-serif] text-[11px] leading-[13px] text-black">
      <header className="flex h-[26px] shrink-0 items-center gap-1 bg-linear-to-b from-[#94b0ea] via-[#748fd8] to-[#82a6e8] px-[2px]">
        <Icon w={16} h={16}>
          <rect width="16" height="16" fill="#c9d0c4" stroke="none" />
          <circle cx="8" cy="5" r="4" fill="#e8ece4" stroke="#222" />
          <path d="M1 3h4M6 2v6M6 5l4-3M6 6l4 3v3" strokeWidth="1.500" />
          <path d="M0 14q3-5 6-1h9v2H0z" fill="#3c7c34" stroke="none" />
        </Icon>
        <h1 className="flex-1 truncate font-['Open_Sans',sans-serif] text-[13px] leading-5 font-semibold text-[#dbe5f8]">
          200W-minimalveg-FET-belső hurokban - Schematic Editor
        </h1>
        <CaptionButtons middle="restore" />
      </header>

      <nav className="flex h-[19px] shrink-0 items-center gap-[11px] pl-[5px] font-['DejaVu_Sans_Condensed','DejaVu_Sans',sans-serif] text-[11px] text-[#a3a294]">
        {menus.map((m) => <button key={m} type="button">{m}</button>)}
      </nav>

      <div className="shrink-0">
        <MainToolbar />
        <Palette />
        <div role="tablist" className="flex h-[22px] items-start gap-[3px] border-b border-b-[#aaa999] pl-1">
          {tabs.map((t, i) => (
            <button
              key={t}
              type="button"
              role="tab"
              aria-selected={i === 0}
              className={clsx(
                "rounded-b-[3px] border-r-2 border-b-2 border-[#8a887b]",
                i === 0 ? "h-[19px] bg-[#fafaf5] px-[7px]" : "h-[18px] px-[3px] shadow-[inset_1px_0_0_#fff]",
              )}
            >
              {t}
            </button>
          ))}
        </div>
      </div>

      <main className="flex min-h-0 flex-1">
        <div className="relative min-w-0 flex-1 overflow-hidden">
          <Schematic />
          <FunctionGenerator />
          <Oscilloscope />
        </div>
        <div className="flex w-[17px] flex-col items-center gap-px border-r border-r-[#aaa999] bg-[#f3f2ea] py-px">
          <ScrollBtn name="Scroll up" d="M1 7l4-4 4 4" />
          <div className={clsx(SCROLL_BTN, "h-[26px] w-4")}>
            <Icon w={8} h={8}><path d="M1 .5h6M1 2.500h6M1 4.500h6M1 6.500h6" stroke="#f4f8ff" /></Icon>
          </div>
          <div className="flex-1" />
          <ScrollBtn name="Scroll down" d="M1 3l4 4 4-4" />
        </div>
      </main>

      <div className="flex h-[17px] shrink-0 items-center gap-px bg-[#f3f2ea] pr-[17px]">
        <ScrollBtn name="Scroll left" d="M7 1L3 5l4 4" />
        <div className={clsx(SCROLL_BTN, "h-4 w-[98px]")}>
          <Icon w={8} h={8}><path d="M.5 1v6M2.500 1v6M4.500 1v6M6.500 1v6" stroke="#f4f8ff" /></Icon>
        </div>
        <div className="flex-1" />
        <ScrollBtn name="Scroll right" d="M3 1l4 4-4 4" />
      </div>

      <div className="flex h-5 shrink-0 items-start border-b border-b-white pl-[2px]">
        <button type="button" className="h-[18px] rounded-br-[3px] border-r-2 border-b-2 border-[#8a887b] bg-[#f6f6ef] pr-1 pl-[6px]">
          200W-minimalveg-FET-belső hurokban
        </button>
      </div>

      <div className="flex h-6 shrink-0 items-stretch border-b-2 border-b-[#aaa999] bg-[#e7e6d9]">
        <div className="flex w-[118px] items-center pt-px pl-1">
          <Btn className="h-5 w-6" pressed label="Schematic">
            <Icon w={22} h={16}><circle cx="10" cy="8" r="6.500" fill="#fff" /><path d="M1 8.500h6M7.500 5v7M8 7l5-4M8 10l5 4M15 2.500h3V14" /><rect x="16.500" y="5.500" width="3" height="6" fill="#000" /></Icon>
          </Btn>
          <Btn className="ml-[6px] h-5 w-[25px] bg-[#c9c9c4]" label="Signal analyzer">
            <Icon w={22} h={16}><path d="M1 3h4v11H1M1 9h4" /><path d="M6 10q3-8 6-2t5 0 4-2" stroke="#c02a2a" /></Icon>
          </Btn>
          <Btn className="ml-[3px] h-5 w-[25px] bg-[#0c7a18]" pressed label="Oscilloscope">
            <Icon w={22} h={16}>
              <rect x="0" y="0" width="22" height="16" fill="#0c7a18" stroke="#031" strokeWidth="2" />
              <path d="M1 8l4-4 4 4 4-4 4 4 4-4" stroke="#3fae48" />
              <path d="M2 12l2 2 2-2 2 2 2-2 2 2 2-2 2 2 2-2 2 2" stroke="#d8f8d8" />
            </Icon>
          </Btn>
          <Btn className="ml-[3px] h-5 w-[25px]">Exit</Btn>
        </div>
        <div className="flex-1 border-t border-l border-t-[#8a887b] border-l-[#8a887b]" />
        <div className="ml-px flex w-[101px] items-center border-t border-l border-t-[#8a887b] border-l-[#8a887b] pl-[2px] whitespace-pre">
          X: 670  Y: 0
        </div>
      </div>

      <TaskBar />
    </div>
  )
}
